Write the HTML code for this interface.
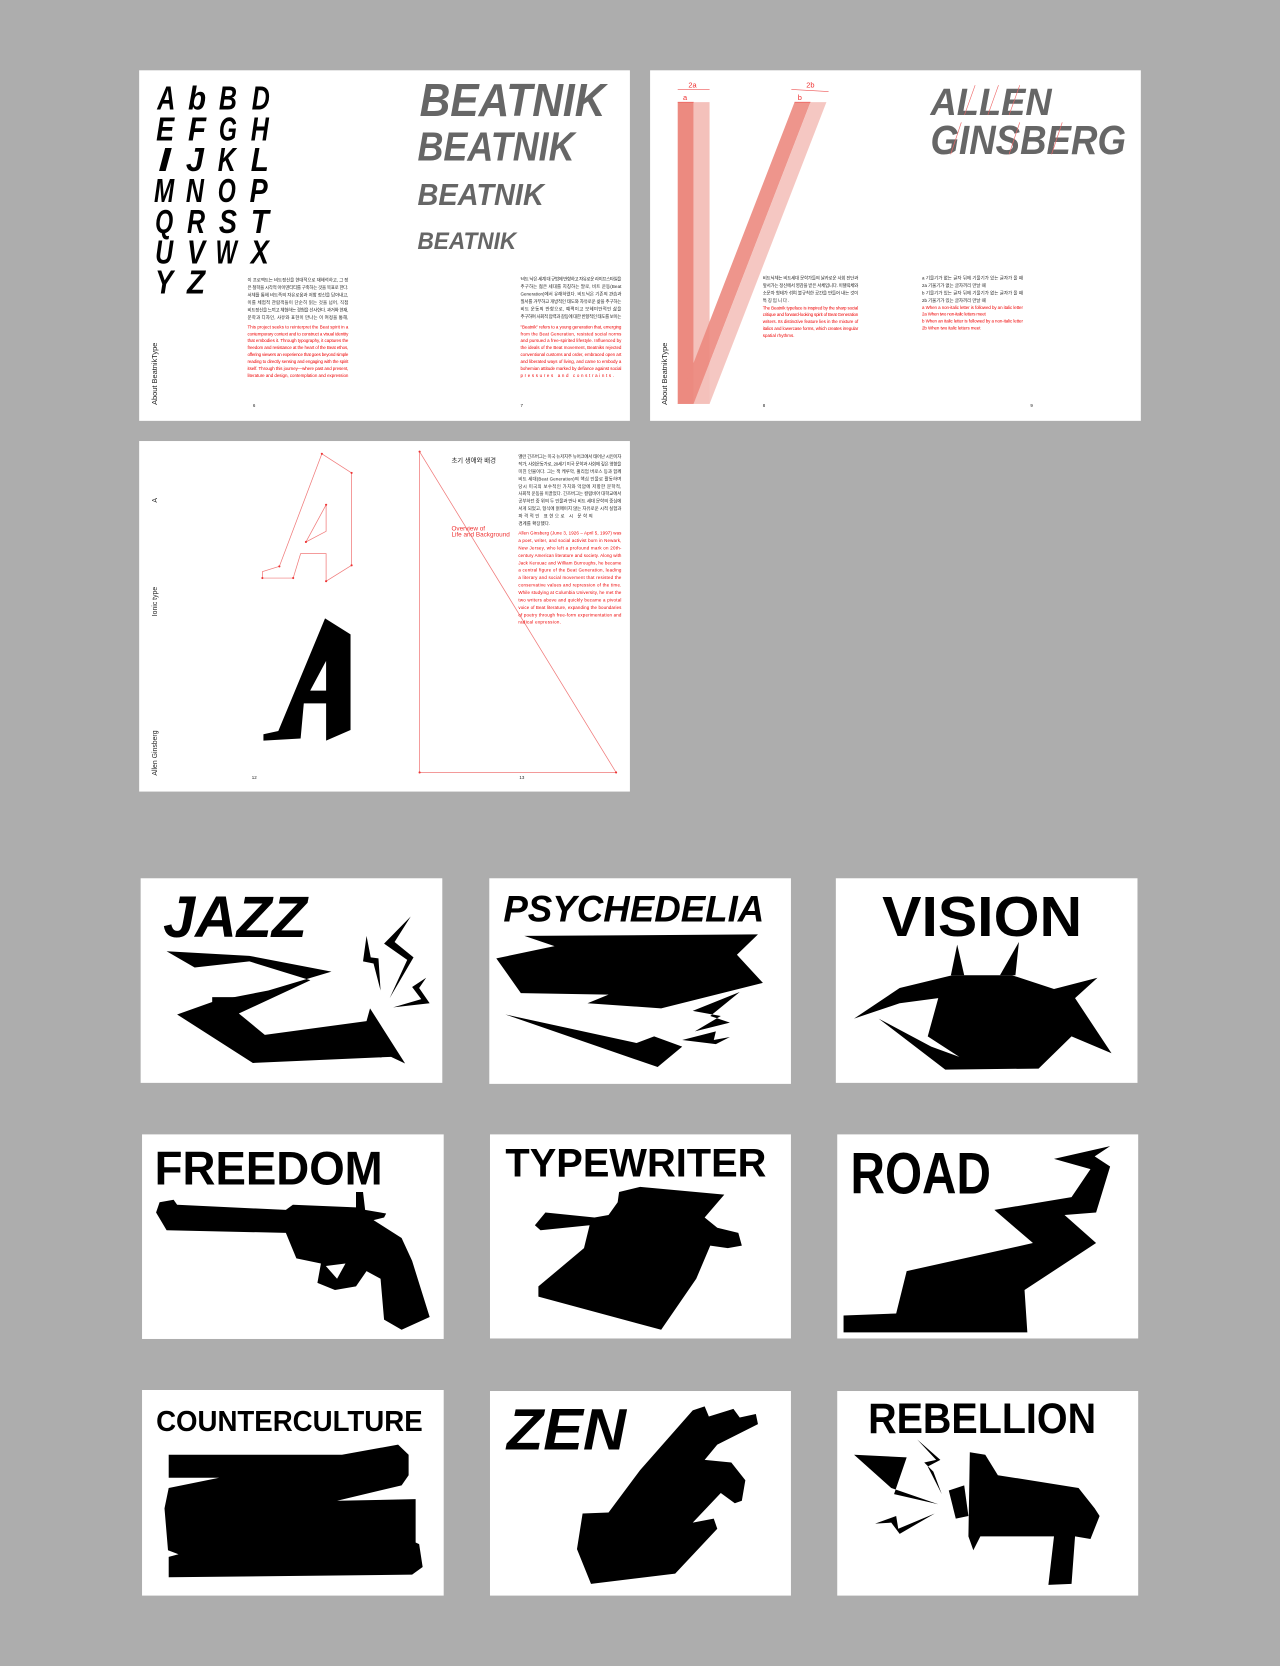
<!DOCTYPE html>
<html><head><meta charset="utf-8"><style>
html,body{margin:0;padding:0;background:#adadad;}
svg{display:block}
.d{font-family:"Liberation Sans Narrow","Liberation Sans",sans-serif;font-weight:bold;}
.s{font-family:"Liberation Sans","Noto Sans CJK KR",sans-serif;font-size:4.2px;}
</style></head><body>
<svg width="1280" height="1666" viewBox="0 0 1205 1568" xmlns="http://www.w3.org/2000/svg">
<rect width="1205" height="1568" fill="#adadad"/>
<!-- Spread 1 -->
<rect x="131" y="66" width="462" height="330" fill="#fff"/>
<g class="d" font-size="31" font-style="italic" fill="#000">
<text x="148" y="103" textLength="17" lengthAdjust="spacingAndGlyphs">A</text><text x="177" y="103" textLength="17" lengthAdjust="spacingAndGlyphs">b</text><text x="206" y="103" textLength="17" lengthAdjust="spacingAndGlyphs">B</text><text x="237" y="103" textLength="17" lengthAdjust="spacingAndGlyphs">D</text>
<text x="147" y="132" textLength="17" lengthAdjust="spacingAndGlyphs">E</text><text x="177" y="132" textLength="17" lengthAdjust="spacingAndGlyphs">F</text><text x="206" y="132" textLength="17" lengthAdjust="spacingAndGlyphs">G</text><text x="236" y="132" textLength="17" lengthAdjust="spacingAndGlyphs">H</text>
<text x="149" y="161" textLength="12" lengthAdjust="spacingAndGlyphs">I</text><text x="175" y="161" textLength="17" lengthAdjust="spacingAndGlyphs">J</text><text x="205" y="161" textLength="17" lengthAdjust="spacingAndGlyphs">K</text><text x="236" y="161" textLength="17" lengthAdjust="spacingAndGlyphs">L</text>
<text x="145" y="190" textLength="19" lengthAdjust="spacingAndGlyphs">M</text><text x="175" y="190" textLength="17" lengthAdjust="spacingAndGlyphs">N</text><text x="205" y="190" textLength="17" lengthAdjust="spacingAndGlyphs">O</text><text x="235" y="190" textLength="17" lengthAdjust="spacingAndGlyphs">P</text>
<text x="146" y="219" textLength="17" lengthAdjust="spacingAndGlyphs">Q</text><text x="176" y="219" textLength="17" lengthAdjust="spacingAndGlyphs">R</text><text x="206" y="219" textLength="17" lengthAdjust="spacingAndGlyphs">S</text><text x="236" y="219" textLength="17" lengthAdjust="spacingAndGlyphs">T</text>
<text x="146" y="248" textLength="17" lengthAdjust="spacingAndGlyphs">U</text><text x="176" y="248" textLength="17" lengthAdjust="spacingAndGlyphs">V</text><text x="203" y="248" textLength="20" lengthAdjust="spacingAndGlyphs">W</text><text x="236" y="248" textLength="17" lengthAdjust="spacingAndGlyphs">X</text>
<text x="146" y="276" textLength="17" lengthAdjust="spacingAndGlyphs">Y</text><text x="176" y="276" textLength="17" lengthAdjust="spacingAndGlyphs">Z</text>
</g>
<g class="d" font-style="italic" fill="#666">
<text x="395" y="109" font-size="44" textLength="175" lengthAdjust="spacingAndGlyphs">BEATNIK</text>
<text x="393" y="151" font-size="38" textLength="148" lengthAdjust="spacingAndGlyphs">BEATNIK</text>
<text x="393" y="193" font-size="29" textLength="119" lengthAdjust="spacingAndGlyphs">BEATNIK</text>
<text x="393" y="234" font-size="23" textLength="93" lengthAdjust="spacingAndGlyphs">BEATNIK</text>
</g>
<g class="s">
<g fill="#222">
<text x="233" y="265" textLength="95">이 프로젝트는 비트정신을 현대적으로 재해석하고, 그 정</text>
<text x="233" y="272" textLength="95">은 철학을 시각적 아이덴티티를 구축하는 것을 목표로 한다.</text>
<text x="233" y="279" textLength="95">서체를 통해 비트족의 자유로움과 저항 정신을 담아내고,</text>
<text x="233" y="286" textLength="95">이를 체험적 관람객들이 단순히 읽는 것을 넘어, 직접</text>
<text x="233" y="293" textLength="95">비트정신을 느끼고 체험하는 경험을 선사한다. 과거와 현재,</text>
<text x="233" y="300" textLength="95">문학과 디자인, 사유와 표현이 만나는 이 여정을 통해,</text>
</g>
<g fill="#e00">
<text x="233" y="309" textLength="95">This project seeks to reinterpret the Beat spirit in a</text>
<text x="233" y="315.5" textLength="95">contemporary context and to construct a visual identity</text>
<text x="233" y="322" textLength="95">that embodies it. Through typography, it captures the</text>
<text x="233" y="328.5" textLength="95">freedom and resistance at the heart of the Beat ethos,</text>
<text x="233" y="335" textLength="95">offering viewers an experience that goes beyond simple</text>
<text x="233" y="341.5" textLength="95">reading to directly sensing and engaging with the spirit</text>
<text x="233" y="348" textLength="95">itself. Through this journey—where past and present,</text>
<text x="233" y="354.5" textLength="95">literature and design, contemplation and expression</text>
</g>
<g fill="#222">
<text x="490" y="264" textLength="95">'비트 닉'은 세계 대 규범에 반항하고 자유로운 라이프스타일을</text>
<text x="490" y="271" textLength="95">추구하는 젊은 세대를 지칭하는 말로, 비트 운동(Beat</text>
<text x="490" y="278" textLength="95">Generation)에서 유래하였다. 비트닉은 기존의 관습과</text>
<text x="490" y="285" textLength="95">질서를 거부하고 개방적인 태도와 자유로운 삶을 추구하는</text>
<text x="490" y="292" textLength="95">비트 운동의 반항으로, 예쩍이고 보헤미안적인 삶을</text>
<text x="490" y="299" textLength="95">추구하며 사회적 압력과 갈등에 대한 반항적인 태도를 보이는</text>
</g>
<g fill="#e00">
<text x="490" y="309" textLength="95">"Beatnik" refers to a young generation that, emerging</text>
<text x="490" y="315.5" textLength="95">from the Beat Generation, resisted social norms</text>
<text x="490" y="322" textLength="95">and pursued a free-spirited lifestyle. Influenced by</text>
<text x="490" y="328.5" textLength="95">the ideals of the Beat movement, Beatniks rejected</text>
<text x="490" y="335" textLength="95">conventional customs and order, embraced open art</text>
<text x="490" y="341.5" textLength="95">and liberated ways of living, and came to embody a</text>
<text x="490" y="348" textLength="95">bohemian attitude marked by defiance against social</text>
<text x="490" y="354.5" textLength="88">pressures and constraints.</text>
</g>
<text x="238" y="383" fill="#222">6</text><text x="490" y="383" fill="#222">7</text>
</g>
<text transform="translate(148,381) rotate(-90)" font-family="Liberation Sans,sans-serif" font-size="7" fill="#222">About BeatnikType</text>

<!-- Spread 2 -->
<rect x="612" y="66" width="462" height="330" fill="#fff"/>
<polygon points="638,96 653,96 653,380 638,380" fill="#ec8a80"/>
<polygon points="653,96 668,96 668,380 653,380" fill="#f4c1bb"/>
<polygon points="638,380 653,380 763,96 748,96" fill="#ec8a80" opacity="0.9"/>
<polygon points="653,380 668,380 778,96 763,96" fill="#f4c1bb" opacity="0.9"/>
<g stroke="#e55" stroke-width="0.6" fill="none">
<line x1="638" y1="84" x2="668" y2="84"/><line x1="638" y1="96" x2="653" y2="96"/>
<line x1="745" y1="84" x2="780" y2="86"/><line x1="748" y1="96" x2="763" y2="96"/>
</g>
<g font-family="Liberation Sans,sans-serif" font-size="7" fill="#e33">
<text x="648" y="82">2a</text><text x="643" y="94">a</text><text x="759" y="82">2b</text><text x="751" y="94">b</text>
</g>
<g class="d" font-style="italic" fill="#666">
<text x="876" y="108" font-size="36" textLength="114" lengthAdjust="spacingAndGlyphs">ALLEN</text>
<text x="876" y="145" font-size="38" textLength="184" lengthAdjust="spacingAndGlyphs">GINSBERG</text>
</g>
<g stroke="#e66" stroke-width="0.6"><line x1="918" y1="80" x2="908" y2="108"/><line x1="940" y1="80" x2="930" y2="108"/><line x1="960" y1="80" x2="950" y2="108"/><line x1="905" y1="115" x2="895" y2="145"/><line x1="960" y1="115" x2="950" y2="145"/><line x1="1000" y1="115" x2="990" y2="145"/></g>
<g class="s">
<g fill="#222">
<text x="718" y="263" textLength="90">비트닉체는 비트세대 문학가들의 날카로운 사회 진단과</text>
<text x="718" y="270" textLength="90">앞서가는 정신에서 영감을 받은 서체입니다. 이탤릭체와</text>
<text x="718" y="277" textLength="90">소문자 형태가 섞여 불규칙한 공간을 만들어 내는 것이</text>
<text x="718" y="284" textLength="25">특징입니다.</text>
</g>
<g fill="#e00">
<text x="718" y="291" textLength="90">The BeatnIk typeface is inspired by the sharp social</text>
<text x="718" y="297.5" textLength="90">critique and forward-looking spirit of Beat Generation</text>
<text x="718" y="304" textLength="90">writers. Its distinctive feature lies in the mixture of</text>
<text x="718" y="310.5" textLength="90">italics and lowercase forms, which creates irregular</text>
<text x="718" y="317" textLength="30">spatial rhythms.</text>
</g>
<g fill="#222">
<text x="868" y="263" textLength="95">a    기울기가 없는 글자 뒤에 기울기가 있는 글자가 올 때</text>
<text x="868" y="270" textLength="60">2a  기울기가 없는 글자끼리 만날 때</text>
<text x="868" y="277" textLength="95">b    기울기가 있는 글자 뒤에 기울기가 없는 글자가 올 때</text>
<text x="868" y="284" textLength="60">2b  기울기가 있는 글자끼리 만날 때</text>
</g>
<g fill="#e00">
<text x="868" y="290.5" textLength="95">a    When a non-italic letter is followed by an italic letter</text>
<text x="868" y="297" textLength="60">2a  When two non-italic letters meet</text>
<text x="868" y="303.5" textLength="95">b    When an italic letter is followed by a non-italic letter</text>
<text x="868" y="310" textLength="55">2b  When two italic letters meet</text>
</g>
<text x="718" y="383" fill="#222">8</text><text x="970" y="383" fill="#222">9</text>
</g>
<text transform="translate(628,381) rotate(-90)" font-family="Liberation Sans,sans-serif" font-size="7" fill="#222">About BeatnikType</text>

<!-- Spread 3 -->
<rect x="131" y="415" width="462" height="330" fill="#fff"/>
<g stroke="#f07a7a" stroke-width="0.7" fill="none">
<polygon points="303,427 331,445 331,532 307,547 307,521 283,521 276,544 247,544 247,538 263,533"/>
<polygon points="307,475 307,500 288,510"/>
<polygon points="395,425 395,727 580,727"/>
</g>
<g fill="#e33"><circle cx="303" cy="427" r="1"/><circle cx="331" cy="445" r="1"/><circle cx="331" cy="532" r="1"/><circle cx="307" cy="547" r="1"/><circle cx="276" cy="544" r="1"/><circle cx="247" cy="544" r="1"/><circle cx="263" cy="533" r="1"/><circle cx="307" cy="475" r="1"/><circle cx="288" cy="510" r="1"/><circle cx="395" cy="425" r="1"/><circle cx="395" cy="727" r="1"/><circle cx="580" cy="727" r="1"/></g>
<polygon points="306,582 330,597 330,687 307,697 307,662 286,662 283,695 248,697 248,691 262,688" fill="#000"/>
<polygon points="307,622 307,650 292,650" fill="#fff"/>
<text x="425" y="435" font-family="Liberation Sans,'Noto Sans CJK KR',sans-serif" font-size="6" fill="#222">초기 생애와 배경</text>
<text x="425" y="499" font-family="Liberation Sans,sans-serif" font-size="6" fill="#e33">Overview of</text>
<text x="425" y="505" font-family="Liberation Sans,sans-serif" font-size="6" fill="#e33">Life and Background</text>
<g class="s">
<g fill="#222">
<text x="488" y="431" textLength="97">앨런 긴즈버그는 미국 뉴저지주 뉴어크에서 태어난 시인이자</text>
<text x="488" y="438" textLength="97">작가, 사회운동가로, 20세기 미국 문학과 사회에 깊은 영향을</text>
<text x="488" y="445" textLength="97">미친 인물이다. 그는 잭 케루악, 윌리엄 버로스 등과 함께</text>
<text x="488" y="452" textLength="97">비트 세대(Beat Generation)의 핵심 인물로 활동하며</text>
<text x="488" y="459" textLength="97">당시 미국의 보수적인 가치와 억압에 저항한 문학적,</text>
<text x="488" y="466" textLength="97">사회적 운동을 이끌었다. 긴즈버그는 컬럼비아 대학교에서</text>
<text x="488" y="473" textLength="97">공부하던 중 위의 두 인물과 만나 비트 세대 문학의 중심에</text>
<text x="488" y="480" textLength="97">서게 되었고, 형식에 얽매이지 않는 자유로운 시적 실험과</text>
<text x="488" y="487" textLength="70">파격적인 표현으로 시 문학의</text>
<text x="488" y="494" textLength="30">경계를 확장했다.</text>
</g>
<g fill="#e00">
<text x="488" y="503" textLength="97">Allen Ginsberg (June 3, 1926 – April 5, 1997) was</text>
<text x="488" y="510" textLength="97">a poet, writer, and social activist born in Newark,</text>
<text x="488" y="517" textLength="97">New Jersey, who left a profound mark on 20th-</text>
<text x="488" y="524" textLength="97">century American literature and society. Along with</text>
<text x="488" y="531" textLength="97">Jack Kerouac and William Burroughs, he became</text>
<text x="488" y="538" textLength="97">a central figure of the Beat Generation, leading</text>
<text x="488" y="545" textLength="97">a literary and social movement that resisted the</text>
<text x="488" y="552" textLength="97">conservative values and repression of the time.</text>
<text x="488" y="559" textLength="97">While studying at Columbia University, he met the</text>
<text x="488" y="566" textLength="97">two writers above and quickly became a pivotal</text>
<text x="488" y="573" textLength="97">voice of Beat literature, expanding the boundaries</text>
<text x="488" y="580" textLength="97">of poetry through free-form experimentation and</text>
<text x="488" y="587" textLength="40">radical expression.</text>
</g>
<text x="237" y="733" fill="#222">12</text><text x="489" y="733" fill="#222">13</text>
</g>
<g font-family="Liberation Sans,sans-serif" font-size="6.5" fill="#222">
<text transform="translate(148,473) rotate(-90)">A</text>
<text transform="translate(148,580) rotate(-90)">Ionic type</text>
<text transform="translate(148,730) rotate(-90)">Allen Ginsberg</text>
</g>

<!-- Cards -->
<g transform="translate(94.1,800.2) scale(0.6604,0.4803)">
<g fill="#fff">
<rect x="58" y="55" width="430" height="401"/><rect x="555" y="55" width="430" height="403"/><rect x="1049" y="55" width="430" height="401"/>
<rect x="60" y="557" width="430" height="401"/><rect x="556" y="557" width="429" height="400"/><rect x="1051" y="557" width="429" height="400"/>
<rect x="60" y="1058" width="430" height="403"/><rect x="556" y="1060" width="429" height="401"/><rect x="1051" y="1060" width="429" height="401"/>
</g>
<g class="d" fill="#000">
<text x="90" y="170" font-size="115" font-style="italic" textLength="205" lengthAdjust="spacingAndGlyphs">JAZZ</text>
<text x="575" y="140" font-size="72" font-style="italic" textLength="372" lengthAdjust="spacingAndGlyphs">PSYCHEDELIA</text>
<text x="1115" y="168" font-size="110" textLength="285" lengthAdjust="spacingAndGlyphs">VISION</text>
<text x="78" y="655" font-size="92" textLength="325" lengthAdjust="spacingAndGlyphs">FREEDOM</text>
<text x="578" y="640" font-size="78" textLength="372" lengthAdjust="spacingAndGlyphs">TYPEWRITER</text>
<text x="1070" y="673" font-size="115" textLength="200" lengthAdjust="spacingAndGlyphs">ROAD</text>
<text x="80" y="1138" font-size="56" textLength="380" lengthAdjust="spacingAndGlyphs">COUNTERCULTURE</text>
<text x="580" y="1175" font-size="115" font-style="italic" textLength="170" lengthAdjust="spacingAndGlyphs">ZEN</text>
<text x="1095" y="1142" font-size="84" textLength="325" lengthAdjust="spacingAndGlyphs">REBELLION</text>
</g>
<g fill="#000">
<polygon points="95,198 213,207 330,238 240,275 165,295 110,322 218,417 415,405 435,418 385,310 380,335 235,362 198,320 300,255 213,218 135,230"/>
<rect x="160" y="288" width="45" height="10"/>
<polygon points="380,168 375,218 390,222 400,275 397,212 386,210"/>
<polygon points="443,130 405,183 438,215 413,290 447,210 420,180"/>
<polygon points="465,250 445,268 458,292 418,308 470,300 455,270"/>
<polygon points="565,212 648,188 605,168 938,165 908,205 945,260 800,310 695,300 725,283 600,280"/>
<polygon points="578,322 765,378 790,365 830,385 795,425"/>
<polygon points="912,278 845,315 885,325 848,355 898,338 870,325"/>
<polygon points="830,372 878,355 875,372 898,366 878,380"/>
<polygon points="1213,245 1222,185 1232,245"/>
<polygon points="1283,245 1310,180 1305,245"/>
<polygon points="1075,330 1140,270 1215,245 1300,245 1360,272 1422,250 1390,290 1442,398 1385,365 1338,428 1205,430 1110,330 1185,385 1225,405 1180,365 1195,290 1140,300"/>
<polygon points="85,690 105,685 110,695 265,705 275,695 365,700 365,670 375,670 378,705 408,712 405,720 390,725 430,760 445,805 470,915 430,940 405,920 400,840 380,825 365,855 335,862 310,848 315,810 280,800 265,750 95,745 80,710"/>
<polygon points="322,815 350,810 338,840" fill="#fff"/>
<polygon points="740,670 770,660 890,675 862,720 880,740 910,750 915,775 895,780 870,775 850,840 800,940 625,875 625,855 690,780 698,735 628,745 620,735 635,710 705,720 725,715 738,690"/>
<polygon points="1060,912 1135,908 1150,825 1330,770 1275,705 1385,680 1412,625 1360,605 1440,580 1418,600 1440,620 1420,710 1375,715 1420,770 1318,862 1322,945 1060,945"/>
<polygon points="98,1185 345,1185 425,1165 440,1185 440,1225 430,1245 338,1275 450,1272 450,1357 455,1360 460,1405 445,1420 98,1425 98,1385 112,1380 97,1372 92,1290 98,1250 170,1230 98,1230"/>
<polygon points="688,1300 725,1298 770,1215 845,1098 862,1090 868,1110 903,1095 912,1112 935,1105 938,1125 880,1165 862,1195 900,1200 920,1235 915,1275 905,1280 885,1260 845,1318 875,1310 880,1330 820,1418 700,1438 680,1370"/>
<polygon points="1240,1180 1262,1185 1280,1225 1395,1250 1418,1290 1425,1305 1412,1350 1390,1345 1385,1438 1352,1440 1360,1345 1255,1345 1245,1372 1238,1345"/>
<polygon points="1210,1255 1232,1245 1238,1305 1220,1310"/>
<polygon points="1075,1185 1150,1190 1132,1262 1195,1282 1128,1250"/>
<polygon points="1165,1155 1198,1195 1180,1208 1200,1262 1188,1218 1175,1200 1192,1195"/>
<polygon points="1105,1320 1135,1305 1138,1330 1190,1300 1140,1340 1128,1318"/>
</g>
</g>
</svg>
</body></html>
